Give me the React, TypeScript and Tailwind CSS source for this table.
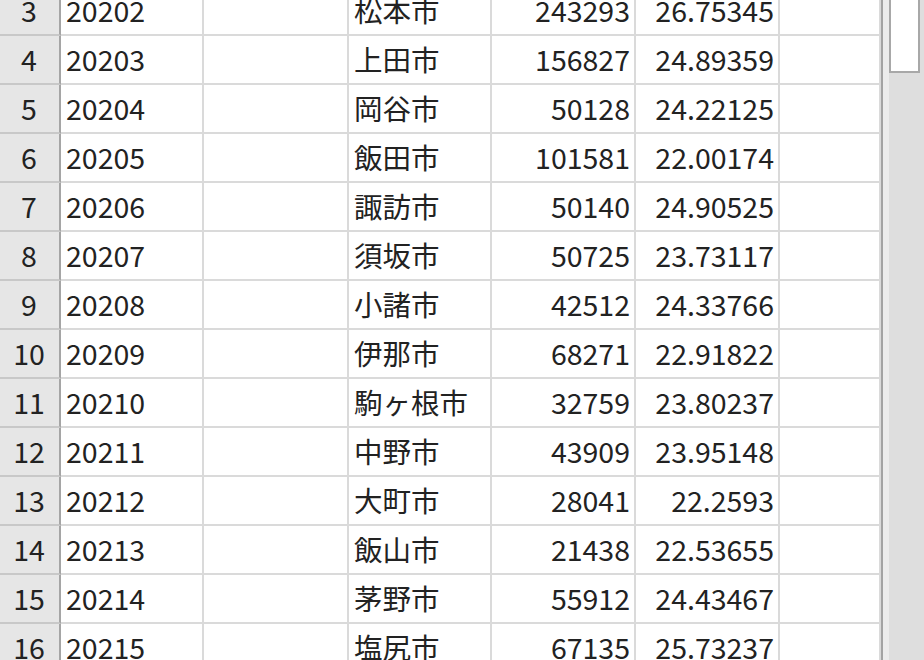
import React from "react";

const rows = [
  [3, "20202", "松本市", "243293", "26.75345"],
  [4, "20203", "上田市", "156827", "24.89359"],
  [5, "20204", "岡谷市", "50128", "24.22125"],
  [6, "20205", "飯田市", "101581", "22.00174"],
  [7, "20206", "諏訪市", "50140", "24.90525"],
  [8, "20207", "須坂市", "50725", "23.73117"],
  [9, "20208", "小諸市", "42512", "24.33766"],
  [10, "20209", "伊那市", "68271", "22.91822"],
  [11, "20210", "駒ヶ根市", "32759", "23.80237"],
  [12, "20211", "中野市", "43909", "23.95148"],
  [13, "20212", "大町市", "28041", "22.2593"],
  [14, "20213", "飯山市", "21438", "22.53655"],
  [15, "20214", "茅野市", "55912", "24.43467"],
  [16, "20215", "塩尻市", "67135", "25.73237"],
];

const cell = "h-[49px] border-r-2 border-b-2 border-[#dadada] flex items-center overflow-hidden whitespace-nowrap";

export default function App() {
  return (
    <div
      className="w-[924px] h-[660px] overflow-hidden bg-white flex text-[28.5px] text-[#222]"
      style={{ fontFamily: '"Noto Sans CJK JP", "Noto Sans", sans-serif' }}
    >
      <div className="w-[883px] border-r-2 border-[#a3a3a3] overflow-hidden">
        <div className="mt-[-13px]">
          {rows.map((r) => (
            <div key={r[0]} className="flex">
              <div className="w-[61px] h-[49px] shrink-0 bg-[#e6e6e6] border-r-2 border-b-2 border-r-[#a5a5a5] border-b-[#c8c8c8] flex items-center justify-center pr-[1px]">
                {r[0]}
              </div>
              <div className={`${cell} w-[143px] shrink-0 pl-[5px]`}>{r[1]}</div>
              <div className={`${cell} w-[145px] shrink-0`}></div>
              <div className={`${cell} w-[143px] shrink-0 pl-[5px]`}>{r[2]}</div>
              <div className={`${cell} w-[144px] shrink-0 justify-end pr-[4px]`}>{r[3]}</div>
              <div className={`${cell} w-[144px] shrink-0 justify-end pr-[4px]`}>{r[4]}</div>
              <div className={`${cell} flex-1 border-r-0`}></div>
            </div>
          ))}
        </div>
      </div>
      <div className="flex-1 bg-[#dedede] flex">
        <div className="w-[6px] bg-[#ececec]"></div>
        <div className="w-[31px] h-[73px] border-2 border-t-0 border-[#a8a8a8] bg-white"></div>
      </div>
    </div>
  );
}
